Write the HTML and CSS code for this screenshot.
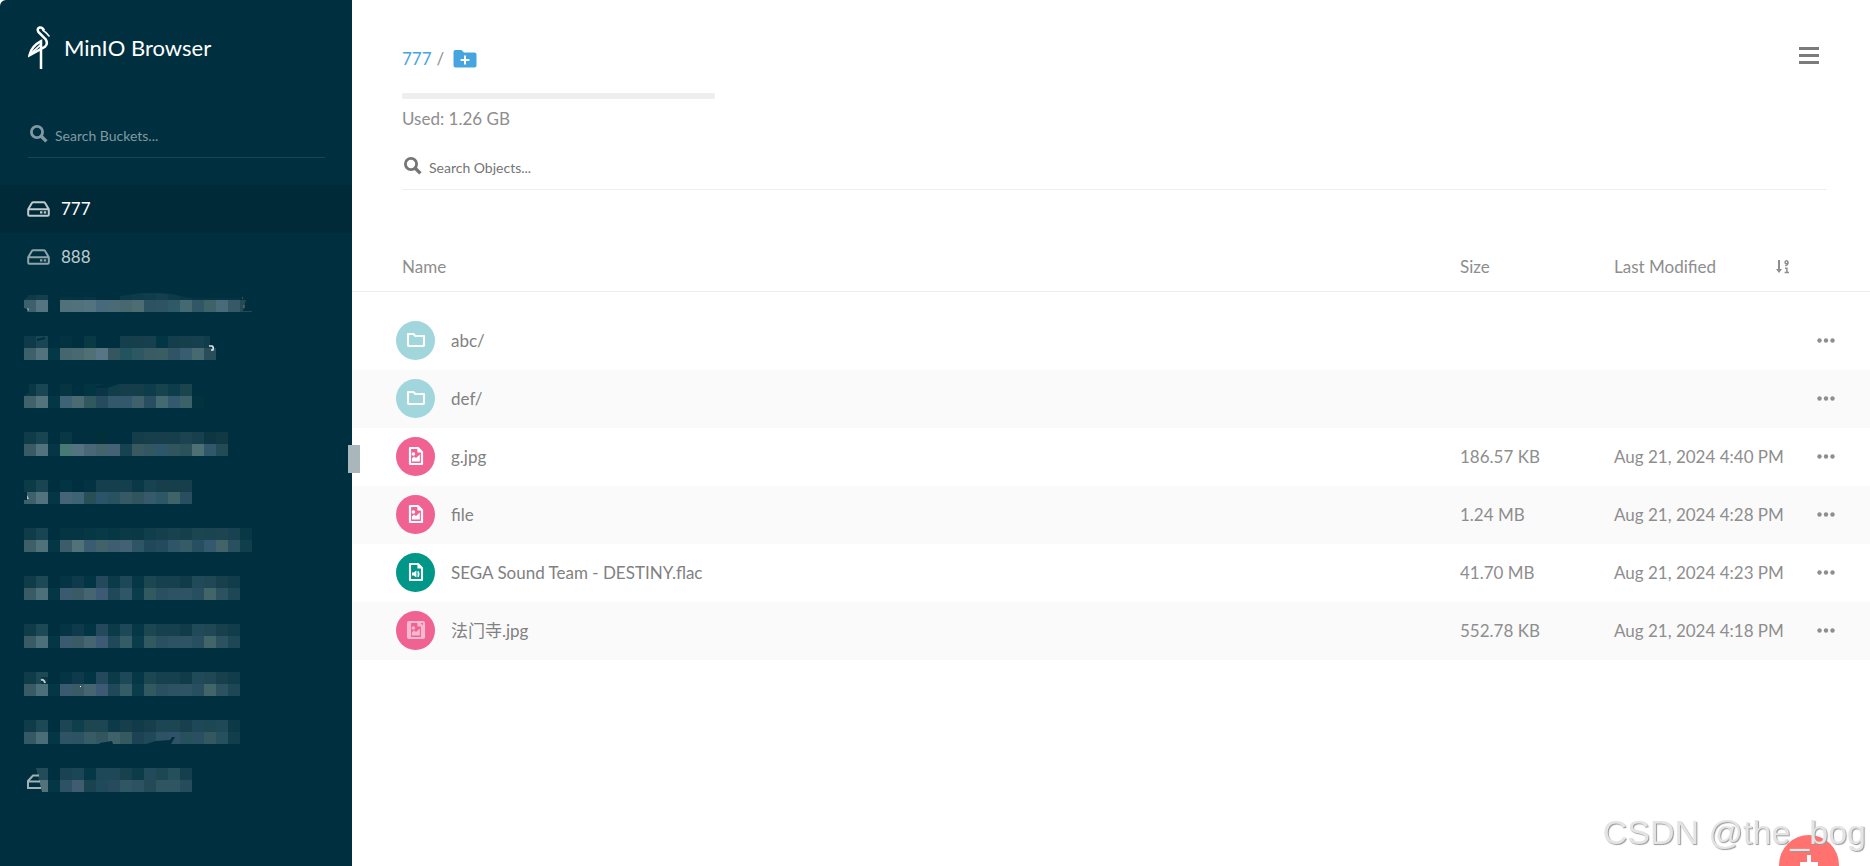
FILE: index.html
```html
<!DOCTYPE html>
<html lang="en">
<head>
  <meta charset="UTF-8">
  <title>MinIO Browser</title>
  <link rel="stylesheet" href="styles.css">
</head>

<body>

  <!-- Shared icons -->
  <svg class="sprite" aria-hidden="true">
    <symbol id="icon-search" viewBox="0 0 18 18">
      <circle cx="7" cy="7" r="5.6" fill="none" stroke="currentColor" stroke-width="2.8"/>
      <path d="M11 11l5.4 5.4" stroke="currentColor" stroke-width="3.4"/>
    </symbol>
    <symbol id="icon-drive" viewBox="0 0 23 16">
      <path d="M1.2 8.2L4.9 2Q5.4 1.2 6.3 1.2h10.4q.9 0 1.4.8l3.7 6.2v5.4q0 1.2-1.2 1.2H2.4q-1.200 0-1.200-1.200zM1.200 8.200h20.600" fill="none" stroke="currentColor" stroke-width="2"/>
      <path d="M13 10.300h2.400v2.200H13zM16.800 10.300h2.400v2.200h-2.400z" fill="currentColor"/>
    </symbol>
    <symbol id="icon-folder" viewBox="0 0 20 16">
      <path d="M2 2h5.400l2 2H18v9.300q0 .7-.7.7H2.700q-.7 0-.7-.7z" fill="none" stroke="currentColor" stroke-width="2.100" stroke-linejoin="round"/>
    </symbol>
    <symbol id="icon-image" viewBox="0 0 16 20">
      <path d="M2 2h8L14 6v12H2z" fill="none" stroke="currentColor" stroke-width="2.200" stroke-linejoin="round"/>
      <path d="M9.400 1.500v5h5zM4 15.400v-3l2-1.800 2 1.400 3.800-3.600v7z" fill="currentColor"/>
      <circle cx="5.400" cy="8" r="1.800" fill="currentColor"/>
    </symbol>
    <symbol id="icon-audio" viewBox="0 0 16 20">
      <path d="M2 2h8L14 6v12H2z" fill="none" stroke="currentColor" stroke-width="2.100" stroke-linejoin="round"/>
      <path d="M9.400 1.500v5h5zM4 10.600h1.800L8.400 8.600v7l-2.600-2H4z" fill="currentColor"/>
      <path d="M10 9.400q1.400 2.700 0 5.400" fill="none" stroke="currentColor" stroke-width="1.800"/>
    </symbol>
    <symbol id="icon-dots" viewBox="0 0 18 5">
      <circle cx="2.5" cy="2.5" r="2.2"/><circle cx="9" cy="2.5" r="2.2"/><circle cx="15.5" cy="2.5" r="2.2"/>
    </symbol>
  </svg>

  <div class="app">

    <!-- Sidebar -->
    <aside class="sidebar">
      <div class="brand">
        <svg class="brand-logo" viewBox="0 0 22 44" fill="none" stroke="#fff">
          <path d="M16 4.500Q14.600 1 11.600 1.500 8.600 2.600 10.400 6L17.600 13.200Q20.400 17.800 17 20.800L1.500 29.200Q3.500 20.200 13 15.200V43" stroke-width="2.500"/>
          <path d="M14.500 4Q18 6 21.500 10.500" stroke-width="1.500"/>
          <path d="M1.500 29L13 18.400" stroke-width="1.800"/>
        </svg>
        <h1>MinIO Browser</h1>
      </div>

      <label class="search search-buckets">
        <svg class="search-icon"><use href="#icon-search"/></svg>
        <input type="text" placeholder="Search Buckets..." aria-label="Search Buckets">
      </label>

      <ul class="buckets" id="buckets">
        <li class="active"><a href="#"><svg class="drive"><use href="#icon-drive"/></svg>777</a></li>
        <li><a href="#"><svg class="drive"><use href="#icon-drive"/></svg>888</a></li>
      </ul>
      <span class="handle"></span>
    </aside>

    <!-- Objects -->
    <main class="content">
      <header class="top">
        <div class="top-row">
          <div class="path">
            <a href="#">777</a> <span>/</span>
            <button class="new-folder" aria-label="Create new path">
              <svg viewBox="0 0 24 18"><path d="M2.500 0h6l2.500 2.600h10.500q2 0 2 2v10.800q0 2-2 2h-19q-2 0-2-2V2q0-2 2-2z" fill="#46a5e0"/><path d="M12 5.600v8.800M7.600 10h8.800" stroke="#fff" stroke-width="2"/></svg>
            </button>
          </div>
          <button class="menu" aria-label="Menu"><i></i><i></i><i></i></button>
        </div>
        <div class="usage"></div>
        <p class="used">Used: 1.26 GB</p>
        <label class="search search-objects">
          <svg class="search-icon"><use href="#icon-search"/></svg>
          <input type="text" placeholder="Search Objects..." aria-label="Search Objects">
        </label>
      </header>

      <table class="objects">
        <thead>
          <tr>
            <th class="col-name">Name</th>
            <th class="col-size">Size</th>
            <th class="col-date"><span class="sort">Last Modified
              <svg viewBox="0 0 14 14"><path d="M3 0v10" stroke="currentColor" stroke-width="2"/><path d="M0 9h6l-3 4z" fill="currentColor"/><path d="M11.800 2.400q.2 3.200-2.600 3.200M8.600 12.600h4.400M10.900 12.600V8.200H9" fill="none" stroke="currentColor" stroke-width="1.500"/><circle cx="10.500" cy="2.200" r="1.500" fill="none" stroke="currentColor" stroke-width="1.400"/></svg></span></th>
            <th class="col-more"></th>
          </tr>
        </thead>
        <tbody>
          <tr>
            <td><a class="object" href="#"><span class="badge folder"><svg><use href="#icon-folder"/></svg></span>abc/</a></td>
            <td></td>
            <td></td>
            <td><button class="more" aria-label="Actions"><svg><use href="#icon-dots"/></svg></button></td>
          </tr>
          <tr>
            <td><a class="object" href="#"><span class="badge folder"><svg><use href="#icon-folder"/></svg></span>def/</a></td>
            <td></td>
            <td></td>
            <td><button class="more" aria-label="Actions"><svg><use href="#icon-dots"/></svg></button></td>
          </tr>
          <tr>
            <td><a class="object" href="#"><span class="badge image"><svg><use href="#icon-image"/></svg></span>g.jpg</a></td>
            <td>186.57 KB</td>
            <td>Aug 21, 2024 4:40 PM</td>
            <td><button class="more" aria-label="Actions"><svg><use href="#icon-dots"/></svg></button></td>
          </tr>
          <tr>
            <td><a class="object" href="#"><span class="badge image"><svg><use href="#icon-image"/></svg></span>file</a></td>
            <td>1.24 MB</td>
            <td>Aug 21, 2024 4:28 PM</td>
            <td><button class="more" aria-label="Actions"><svg><use href="#icon-dots"/></svg></button></td>
          </tr>
          <tr>
            <td><a class="object" href="#"><span class="badge audio"><svg><use href="#icon-audio"/></svg></span>SEGA Sound Team - DESTINY.flac</a></td>
            <td>41.70 MB</td>
            <td>Aug 21, 2024 4:23 PM</td>
            <td><button class="more" aria-label="Actions"><svg><use href="#icon-dots"/></svg></button></td>
          </tr>
          <tr>
            <td><a class="object" href="#"><span class="badge image changing"><svg viewBox="0 0 20 20"><rect x="2" y="2" width="16" height="16" rx="1" fill="none" stroke="currentColor" stroke-width="2.200"/><use href="#icon-image" width="20" height="20"/></svg></span>法门寺.jpg</a></td>
            <td>552.78 KB</td>
            <td>Aug 21, 2024 4:18 PM</td>
            <td><button class="more" aria-label="Actions"><svg><use href="#icon-dots"/></svg></button></td>
          </tr>
        </tbody>
      </table>
    </main>
  </div>

  <button class="fab" aria-label="Upload">
    <svg viewBox="0 0 18 18"><path d="M9 0v18M0 9h18" stroke="#fff" stroke-width="4"/></svg>
  </button>
  <div class="watermark">CSDN @the_bog</div>

  <script src="script.js"></script>

</body>
</html>
```
FILE: styles.css
```css
* {
  box-sizing: border-box;
}

body {
  margin: 0;
  background: #fff;
  font-family: Lato, "Noto Sans CJK SC", sans-serif;
  font-size: 17px;
  line-height: 24px;
  color: #8e8e8e;
  overflow: hidden;
}

a {
  color: inherit;
  text-decoration: none;
}

button {
  padding: 0;
  border: 0;
  background: none;
  cursor: pointer;
}

.sprite {
  display: none;
}

.app {
  display: flex;
  min-height: 100vh;
}

/* Sidebar */
.sidebar {
  position: relative;
  flex: 0 0 352px;
  background: #002f3f;
  border-top-left-radius: 6px;
  color: #fff;
}

.brand {
  display: flex;
  align-items: center;
  gap: 14px;
  padding: 26px 28px 0;
}

.brand-logo {
  width: 22px;
  height: 44px;
}

.brand h1 {
  margin: 0;
  font-size: 22px;
  font-weight: 400;
  line-height: 28px;
}

.search {
  display: flex;
  gap: 7px;
}

.search-icon {
  width: 18px;
  height: 18px;
}

.search input {
  flex: 1;
  height: 22px;
  padding: 0;
  border: 0;
  outline: 0;
  background: none;
  font: 14px/22px Lato, sans-serif;
}

.search input::placeholder {
  color: inherit;
  opacity: 1;
}

.search-buckets {
  margin: 55px 27px 27px 28px;
  padding-left: 2px;
  height: 33px;
  border-bottom: 1px solid #1c4553;
  color: #809aa2;
}

.search-buckets input {
  color: #809aa2;
}

.buckets {
  margin: 0;
  padding: 0;
  list-style: none;
}

.buckets li {
  height: 48px;
  color: #bfcbcf;
}

.buckets .active {
  background: #002a38;
  color: #fff;
}

.buckets a {
  display: flex;
  align-items: center;
  gap: 11px;
  height: 47px;
  padding-left: 27px;
}

.drive {
  width: 23px;
  height: 16px;
  color: #8fa4ab;
}

.active .drive {
  color: #bfcacd;
}

.mosaic {
  display: block;
  margin: 0 24px;
  padding-top: 7px;
  width: 228px;
  height: 31px;
}

.handle {
  position: absolute;
  right: -8px;
  top: 445px;
  width: 12px;
  height: 28px;
  background: #a9b7bc;
}

/* Header */
.content {
  flex: 1;
  min-width: 0;
}

.top {
  padding: 40px 43px 0 50px;
}

.top-row {
  display: flex;
  justify-content: space-between;
  align-items: center;
  height: 38px;
}

.path {
  display: flex;
  align-items: center;
  gap: 5px;
  font-size: 17px;
}

.path a {
  color: #46a5e0;
}

.new-folder {
  margin-left: 4px;
}

.new-folder svg {
  display: block;
  width: 24px;
  height: 18px;
}

.menu {
  display: flex;
  flex-direction: column;
  gap: 4px;
  margin: 0 8px 8px 0;
}

.menu i {
  width: 20px;
  height: 3px;
  background: #7b7b7b;
}

.usage {
  width: 313px;
  height: 6px;
  margin-top: 15px;
  border-radius: 2px;
  background: #eee;
}

.used {
  margin: 8px 0 0;
}

.search-objects {
  margin-top: 26px;
  padding-left: 2px;
  height: 33px;
  border-bottom: 1px solid #eee;
  color: #757575;
}

.search-objects input {
  color: #757575;
}

/* Object list */
.objects {
  width: 100%;
  margin-top: 54px;
  table-layout: fixed;
  border-collapse: collapse;
}

th,
td {
  padding: 0;
  text-align: left;
  font-weight: 400;
}

th {
  height: 47px;
  border-bottom: 1px solid #eee;
}

.col-name {
  padding-left: 50px;
}

.col-size {
  width: 154px;
}

.col-date {
  width: 199px;
}

.col-more {
  width: 57px;
}

.sort {
  display: flex;
  align-items: center;
  justify-content: space-between;
  padding-right: 23px;
}

.sort svg {
  width: 14px;
  height: 14px;
}

tbody::before {
  content: "";
  display: block;
  height: 20px;
}

td {
  height: 58px;
}

tbody tr:nth-child(even) {
  background: #fafafa;
}

.object {
  display: flex;
  align-items: center;
  gap: 16px;
  padding-left: 44px;
  color: #818181;
}

.badge {
  display: flex;
  align-items: center;
  justify-content: center;
  width: 39px;
  height: 39px;
  padding-bottom: 2px;
  border-radius: 50%;
  color: #fff;
}

.badge svg {
  width: 20px;
  height: 20px;
}

.folder {
  background: #a1d6dd;
}

.image {
  background: #f06292;
}

.audio {
  background: #009688;
}

.changing svg {
  opacity: .55;
}

.more {
  display: flex;
  margin-left: 4px;
}

.more svg {
  width: 18px;
  height: 5px;
  fill: #8e8e8e;
}

.fab {
  position: fixed;
  right: 31px;
  bottom: -29px;
  width: 60px;
  height: 60px;
  border-radius: 50%;
  background: #ff726f;
}

.fab svg {
  width: 18px;
  height: 18px;
}

.watermark {
  position: fixed;
  right: 4px;
  bottom: 14px;
  font: 34px/40px "Liberation Sans", sans-serif;
  color: #e4e4e4;
  text-shadow: 1px 1px 1px #999;
}
```
FILE: script.js
```js
// masked bucket names: two lines of 12px cells per bucket, "-" is an empty cell
var masked = [
  ['0e3a49 153f4d - 043341 033341 063643 - - 0b3947 0e3b49 0f3d4b 153f4d 0e3b48 0b3845 043542 043542 043542 043542', '3c616d 537480 - 4f7179 51727c 527480 46697b 4a6b76 48686f 4d6d72 2d5261 2d5364 305967 456970 315766 3d6369 496a78 365967'],
  ['0e3a49 1a4654 - 033341 - 083a43 - - 153f4d 163e4b 16404e 023645 143e4c 153f4b 16404e 113c4a', '3c616b 52727d 033847 43666f 486970 507074 577584 34575f 245360 2d5762 395c64 3a5d62 305466 385d70 476970 284e5c'],
  ['0b3845 1a4653 - 053541 - 033441 0b3546 103d4a 153d4a 153e4a 0d3c4a 17434f 0d3c4a 1a454f', '3f626b 53737d 053645 3e6377 4a6b70 30585e 264b60 32586a 32586b 3e616c 284e60 456970 34586e 3b6169 03323f'],
  ['103b49 194451 - 093744 - - 022f3a - - 153d49 163f4b 163f4b 163f4b 1c4450 18404c 0c3742 103943', '385b66 52737e 053645 487975 54727f 4a6777 42646c 456176 17424f 38595f 325761 2d566a 31555f 2b5159 4c7074 31576b 234b55'],
  ['0d3a47 194452 - 033443 - 033342 14404d 153f4c 153f4c 0b3846 17424f 163f4b 163f4b 163f4b', '3c616b 52737e 053645 456576 3e6375 274f56 2b5369 285260 355965 31555f 36596c 2e5765 3e6469 284e60'],
  ['103b49 194451 - 053442 053542 053844 083946 053744 0b3946 0a3845 103f4b 153f4d 17434f 163f4c 1c4552 194450 1c4551 18424f 083745', '3d5f68 4f717a 053645 3b5d69 52727a 3a5c70 426269 3e5d71 426174 2d5565 214858 244b5d 2f5568 355b66 264f61 335870 426367 29505f 103e4b'],
  ['103c4a 1d4856 - 053544 0e3a4c 023543 24485c 0b3a49 1d4857 053746 1c4651 16404d 16404d 103c49 204a58 204854 183f4c 113c4a', '385b65 4c707a 053645 3a5a70 385b65 466570 3c5a75 1f4858 2f5666 0b3c4b 315a60 2a4f60 2c5364 2f5265 274f60 416569 2c5260 1d4656'],
  ['103c4a 1d4856 - 053544 0e3a4c 023543 24485c 0b3a49 1d4857 053746 1c4651 16404d 16404d 103c49 204a58 204854 183f4c 113c4a', '385b65 4c707a 053645 3a5a70 385b65 466570 3c5a75 1f4858 345c66 0b3c4b 315a60 2a4f60 2c5364 2f5265 274f60 416569 2c5260 1d4656'],
  ['103c4a 1d4856 - 053544 0e3a4c 023543 24485c 0b3a49 1d4857 053746 1c4651 16404d 16404d 103c49 204a58 204854 183f4c 113c4a', '385b65 4c707a 053645 3a5a70 385b65 466570 3c5a75 1f4858 345c66 0b3c4b 315a60 2a4f60 2c5364 2f5265 274f60 416569 2c5260 1d4656'],
  ['103c4a 1d4856 - 1c4654 0e3f4b 1d4651 1d4652 0d3a49 163e4b 123b49 163e4b 1d4654 1c4752 183f4d 1e4857 1d4752 1f4957 0c3947', '345865 4b6d77 053645 2d5364 2b5364 385c65 31565e 3e616a 34595f 1c4353 1f4859 2c5264 305268 25505c 2a4f60 34585f 26505e 123e4b'],
  ['- 244c58 - 1a4250 1b4655 053746 1e4858 1e4857 18414e 0d3c49 224a5a 1d4852 24505a 153f4c', '- 52727c 053645 2e5265 405c70 1a4350 20495b 274b5d 2e5763 2d5362 244957 2e5561 2e5561 254c5a']
];

// ragged edges of the masks, in the coordinates of the cell grid
var extras = {
  0: '<path d="M0 0h228v10h-62l-18-4-16-1h-15L96 8l-24 1H24V7H5l-5 5z" fill="#002f3f"/><path d="M0 20l4 1-1 3H0z" fill="#002f3f"/><path d="M3 20l2 1-1 2z" fill="#bfcacd"/><path d="M216 12h6l-3 11h9v1h-12z" fill="#224b58"/><path d="M218 10h1M220 17v3" stroke="#a56a48"/>',
  1: '<path d="M186 12h6V0h-6z" fill="#002f3f"/><path d="M185 10h3q2 1 1 4h-2" fill="none" stroke="#dfe5e7" stroke-width="1.500"/><path d="M13 4l8-2" stroke="#002f3f" stroke-width="2"/>',
  2: '<path d="M0 0h5v8l-5 4zM72 2l8-2h15l-12 4H72z" fill="#002f3f"/>',
  4: '<path d="M0 12h3v8H0z" fill="#002f3f"/><path d="M3 15l2 4H3z" fill="#bfcacd"/>',
  8: '<path d="M17 5h7v7h-7z" fill="#0a3644"/><path d="M17 8q3-1 4 3" fill="none" stroke="#bfcacd" stroke-width="2"/><path d="M56 14h1v1h-1z" fill="#fff"/>',
  9: '<path d="M75 24l1-1 12-2 1 3zM122 24l10-3 14-1 2-3h3l-4 7z" fill="#002f3f"/>',
  10: '<path d="M12 0l6 24h-6z" fill="#002f3f"/><path d="M15 7.500H9L4 13v7h13M4 13.500h12" fill="none" stroke="#a1b1b6" stroke-width="2"/>'
};

var list = document.getElementById('buckets');

masked.forEach(function (lines, n) {
  var cells = '';
  lines.forEach(function (line, row) {
    line.split(' ').forEach(function (color, i) {
      if (color === '-') return;
      cells += '<rect x="' + i * 12 + '" y="' + row * 12 + '" width="12" height="12" fill="#' + color + '"/>';
    });
  });
  var li = document.createElement('li');
  li.innerHTML = '<svg class="mosaic" viewBox="0 0 228 24">' + cells + (extras[n] || '') + '</svg>';
  list.appendChild(li);
});
```
